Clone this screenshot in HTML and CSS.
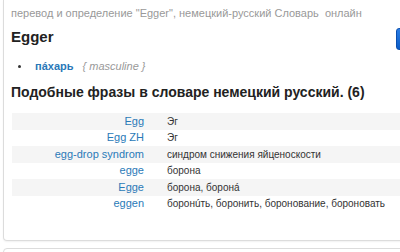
FILE: index.html
```html
<!DOCTYPE html>
<html lang="ru">
<head>
    <meta charset="UTF-8">
    <title>Egger</title>
    <link rel="stylesheet" href="styles.css">
</head>
<body>
    <div class="panel">
        <div class="top">
            <div class="info">
                <p class="subtitle">перевод и определение "Egger", немецкий-русский Словарь&nbsp; онлайн</p>
                <h1>Egger</h1>
            </div>
            <button class="btn"></button>
        </div>
        <ul class="meanings">
            <li><a href="#">пáхарь</a> <span class="gram">{ masculine }</span></li>
        </ul>
        <h2>Подобные фразы в словаре немецкий русский. (6)</h2>
        <table class="phrases">
            <tr><td class="src"><a href="#">Egg</a></td><td>Эг</td></tr>
            <tr><td class="src"><a href="#">Egg ZH</a></td><td>Эг</td></tr>
            <tr><td class="src"><a href="#">egg-drop syndrom</a></td><td>синдром снижения яйценоскости</td></tr>
            <tr><td class="src"><a href="#">egge</a></td><td>борона</td></tr>
            <tr><td class="src"><a href="#">Egge</a></td><td>борона, боронá</td></tr>
            <tr><td class="src"><a href="#">eggen</a></td><td>боронúть, боронить, боронование, бороновать</td></tr>
        </table>
    </div>
    <div class="panel next"></div>
</body>
</html>
```

FILE: styles.css
```css
html, body {
    margin: 0;
    overflow: hidden;
    background: #fff;
    font-family: "Liberation Sans", Arial, sans-serif;
    color: #333;
}
.panel {
    width: 430px;
    margin-left: 3px;
    padding: 6px 8px 28px 7px;
    border: 1px solid #dcdcdc;
    border-top: none;
    border-radius: 0 0 4px 4px;
    box-shadow: 0 1px 2px rgba(0, 0, 0, 0.06);
    box-sizing: border-box;
}
.panel.next {
    margin-top: 7px;
    height: 20px;
    padding: 0;
    border-top: 1px solid #dcdcdc;
    border-radius: 4px 4px 0 0;
}
.top {
    display: flex;
    align-items: flex-start;
}
.info {
    width: 385px;
    flex-shrink: 0;
}
.subtitle {
    margin: 0;
    font-size: 11px;
    line-height: 15px;
    color: #999;
}
h1 {
    margin: 7px 0 0;
    font-size: 15px;
    line-height: 18px;
    color: #222;
}
.btn {
    flex-shrink: 0;
    margin-top: 22px;
    width: 40px;
    height: 22px;
    border: 1px solid #0a4fb0;
    border-radius: 3px;
    background: linear-gradient(#2a7ee6, #0b5cc6);
}
.meanings {
    margin: 9px 0 0;
    padding-left: 24px;
    font-size: 11px;
    line-height: 14px;
}
.meanings li {
    list-style: none;
    position: relative;
}
.meanings li::before {
    content: "";
    position: absolute;
    left: -17px;
    top: 6px;
    width: 3px;
    height: 3px;
    border-radius: 50%;
    background: #333;
}
.meanings a {
    color: #2a78b8;
    font-weight: bold;
    text-decoration: none;
}
.gram {
    margin-left: 6px;
    color: #999;
    font-style: italic;
}
h2 {
    margin: 11px 0 0;
    font-size: 14px;
    line-height: 17px;
    color: #222;
}
.phrases {
    margin: 12px 0 0 1px;
    width: 410px;
    border-collapse: collapse;
    font-size: 10px;
}
.phrases td {
    height: 16.5px;
    padding: 0 0 0 17px;
    line-height: 13px;
    white-space: nowrap;
}
.phrases td.src {
    width: 132px;
    padding: 0 6px 0 0;
    font-size: 11px;
    text-align: right;
}
.phrases tr:nth-child(odd) {
    background: #f5f5f5;
}
.phrases a {
    color: #2a7ab8;
    text-decoration: none;
}
```
